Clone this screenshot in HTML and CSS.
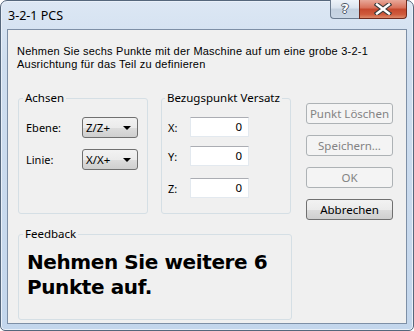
FILE: index.html
```html
<!DOCTYPE html>
<html lang="de">
<head>
  <meta charset="UTF-8">
  <title>3-2-1 PCS</title>
  <link rel="stylesheet" href="styles.css">
</head>
<body>
  <div class="window">
    <!-- Title bar -->
    <div class="titlebar">
      <span class="title">3-2-1 PCS</span>
      <div class="caption-buttons">
        <div class="cap-btn help"><span class="help-glyph">?</span></div>
        <div class="cap-btn close">
          <svg width="18" height="12" viewBox="0 0 18 12">
            <path d="M3 1.5 L15 10.5 M15 1.5 L3 10.5" stroke="#3b3b3b" stroke-width="4.6" stroke-linecap="square"/>
            <path d="M3 1.5 L15 10.5 M15 1.5 L3 10.5" stroke="#fff" stroke-width="2.4" stroke-linecap="square"/>
          </svg>
        </div>
      </div>
    </div>

    <!-- Client area -->
    <div class="client">
      <p class="intro">Nehmen Sie sechs Punkte mit der Maschine auf um eine grobe 3-2-1<br>Ausrichtung für das Teil zu definieren</p>

      <div class="main">
        <fieldset class="group axes">
          <legend>Achsen</legend>
          <div class="row row-ebene">
            <label>Ebene:</label>
            <div class="combo"><span>Z/Z+</span><span class="arrow"></span></div>
          </div>
          <div class="row row-linie">
            <label>Linie:</label>
            <div class="combo"><span>X/X+</span><span class="arrow"></span></div>
          </div>
        </fieldset>

        <fieldset class="group offset">
          <legend>Bezugspunkt Versatz</legend>
          <div class="row row-x">
            <label>X:</label>
            <div class="textbox">0</div>
          </div>
          <div class="row row-y">
            <label>Y:</label>
            <div class="textbox">0</div>
          </div>
          <div class="row row-z">
            <label>Z:</label>
            <div class="textbox">0</div>
          </div>
        </fieldset>

        <div class="buttons">
          <button class="btn" disabled>Punkt Löschen</button>
          <button class="btn" disabled>Speichern…</button>
          <button class="btn" disabled>OK</button>
          <button class="btn default">Abbrechen</button>
        </div>
      </div>

      <fieldset class="group feedback">
        <legend>Feedback</legend>
        <p class="feedback-text">Nehmen Sie weitere 6<br>Punkte auf.</p>
      </fieldset>
    </div>
  </div>
</body>
</html>
```

FILE: styles.css
```css
/* General */
body {
  margin: 0;
  font-family: 'Noto Sans', Arial, sans-serif;
  font-size: 11px;
  color: #000;
  background: #fff;
}

/* Window frame */
.window {
  width: 414px;
  height: 331px;
  box-sizing: border-box;
  border: 1px solid #55677c;
  border-radius: 7px 7px 5px 5px;
  padding: 0 6px 6px 6px;
  display: flex;
  flex-direction: column;
  background: linear-gradient(to bottom, #dce7f4 0, #cfdeef 60px, #c3d6ec 100%);
  box-shadow: inset 0 0 0 1px #e9f0f9;
}

.titlebar {
  height: 28px;
  display: flex;
  align-items: flex-start;
}

.title {
  font-size: 12.5px;
  margin: 6px 0 0 1px;
  color: #000;
}

.caption-buttons {
  margin-left: auto;
  display: flex;
  margin-top: -1px;
}

.cap-btn {
  height: 19px;
  box-sizing: border-box;
  border: 1px solid #6a7a8e;
  border-top: none;
  display: flex;
  align-items: center;
  justify-content: center;
}

.help {
  width: 29px;
  border-radius: 0 0 0 4px;
  border-right: none;
  background: linear-gradient(to bottom, #eef3f9 0, #d9e3ee 45%, #c3d0df 50%, #c9d6e5 100%);
}

.help-glyph {
  font-family: 'DejaVu Sans', sans-serif;
  font-weight: bold;
  font-size: 13px;
  color: #fff;
  line-height: 1;
  margin-top: -1px;
  text-shadow: 1px 0 0 #4d5866, -1px 0 0 #4d5866, 0 1px 0 #4d5866, 0 -1px 0 #4d5866;
}

.close {
  width: 48px;
  border-color: #702a1d;
  border-radius: 0 0 4px 0;
  background: linear-gradient(to bottom, #e8a899 0, #d86f58 45%, #c5472d 50%, #cf5a3c 80%, #dc8a6b 100%);
}

/* Client area */
.client {
  flex: 1;
  border: 1px solid #7d8fa6;
  background: #f0f0f0;
  padding: 15px 0 0 10px;
}

.intro {
  margin: 0 0 20px -1px;
  font-family: 'Liberation Sans', Arial, sans-serif;
  font-size: 11px;
  line-height: 13px;
  letter-spacing: 0.22px;
  height: 26px;
}

.main {
  display: flex;
  align-items: flex-start;
}

/* Group boxes */
.group {
  margin: 0;
  padding: 0 6px;
  border: 1px solid #d5dfe5;
  border-radius: 3px;
  box-sizing: border-box;
  min-width: 0;
}

.group legend {
  padding: 0 2px;
  margin-left: -3px;
  font-size: 11.5px;
  line-height: 14px;
}

.axes {
  width: 130px;
  height: 123px;
  padding-left: 7px;
}

.offset {
  width: 130px;
  height: 123px;
  margin-left: 13px;
}

.row {
  display: flex;
  align-items: center;
}

.axes label {
  width: 56px;
}

.offset label {
  width: 22px;
}

.row-ebene { margin-top: 12px; }
.row-linie { margin-top: 11px; }
.row-x { margin-top: 12px; }
.row-y { margin-top: 9px; }
.row-z { margin-top: 12px; }

/* Combo boxes */
.combo {
  width: 56px;
  height: 21px;
  box-sizing: border-box;
  border: 1px solid #707070;
  border-radius: 3px;
  background: linear-gradient(to bottom, #f2f2f2 0, #ebebeb 50%, #dddddd 51%, #cfcfcf 100%);
  display: flex;
  align-items: center;
  padding: 0 6px 0 3px;
  font-size: 11.5px;
}

.combo .arrow {
  margin-left: auto;
  width: 0;
  height: 0;
  border-left: 4px solid transparent;
  border-right: 4px solid transparent;
  border-top: 4px solid #000;
}

/* Text boxes */
.textbox {
  width: 59px;
  height: 20px;
  box-sizing: border-box;
  border: 1px solid #e3e9ef;
  border-top-color: #abadb3;
  background: #fff;
  text-align: right;
  padding-right: 6px;
  line-height: 18px;
  font-size: 11.5px;
}

/* Buttons column */
.buttons {
  margin: 12px 0 0 15px;
  display: flex;
  flex-direction: column;
  gap: 11px;
}

.btn {
  width: 87px;
  height: 21px;
  font-family: inherit;
  font-size: 11.5px;
  padding: 0;
  border-radius: 3px;
  border: 1px solid #adb2b5;
  background: #f4f4f4;
  color: #838383;
}

.btn.default {
  border-color: #707070;
  color: #000;
  background: linear-gradient(to bottom, #f2f2f2 0, #ebebeb 50%, #dddddd 51%, #cfcfcf 100%);
}

/* Feedback group */
.feedback {
  width: 274px;
  height: 93px;
  margin-top: 7px;
  padding-left: 7px;
}

.feedback-text {
  margin: 9px 0 0 1px;
  font-family: 'DejaVu Sans', Verdana, sans-serif;
  font-weight: bold;
  font-size: 20px;
  line-height: 25px;
  letter-spacing: -0.4px;
}
```
